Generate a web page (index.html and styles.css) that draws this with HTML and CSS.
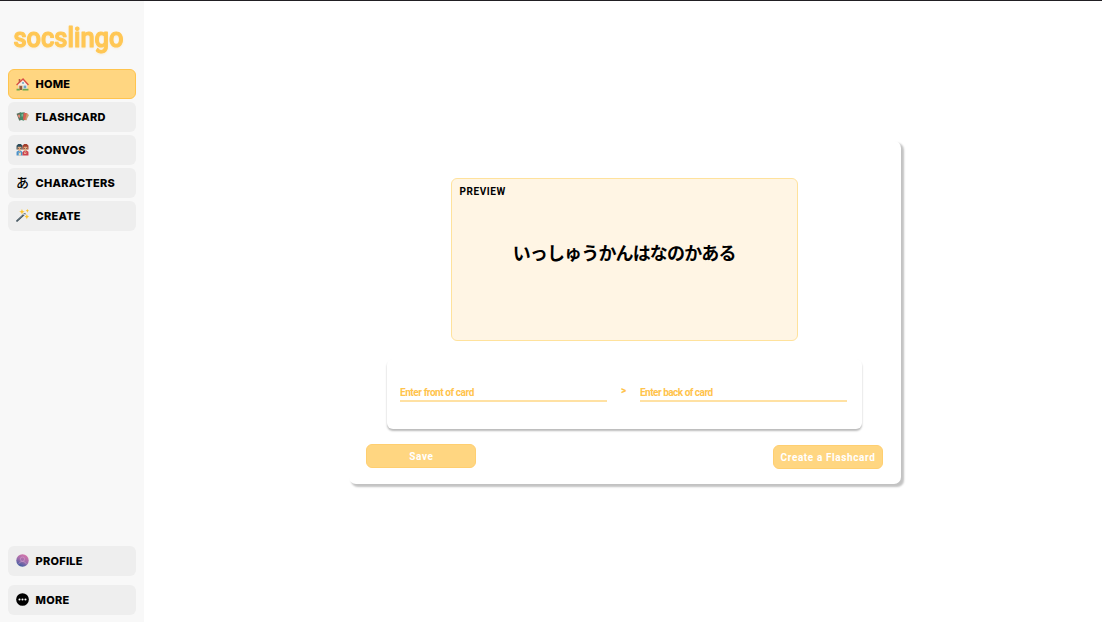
FILE: index.html
```
<!DOCTYPE html>
<html lang="en">
<head>
<meta charset="utf-8">
<title>socslingo</title>
<link rel="stylesheet" href="styles.css">
</head>
<body>
<div class="app">
  <aside class="sidebar">
    <svg class="logo" width="128" height="44" viewBox="0 0 128 44" role="img"><text x="5.500" y="25.700" textLength="110" lengthAdjust="spacingAndGlyphs">socslingo</text></svg>
    <nav class="nav">
      <a class="item active">
        <svg class="icon" viewBox="0 0 24 24"><path fill="#f3eee4" d="M4 11 13 3l8 8v11H4z"/><path fill="#d39a67" d="M5 14h7v8H5z"/><path fill="#8b563b" d="M7 15h4v7H7z"/><path fill="#6ca4c8" d="M14 14h5v5h-5z"/><circle cx="13" cy="9" r="1.8" fill="#649abd"/><path fill="none" stroke="#d94d46" stroke-width="2.5" d="M1 13 13 2l10 11"/><path fill="#bd5a46" d="M5 2h3v5L5 9z"/><path fill="#71a84c" d="M1 20h6v3H1zM12 20h11v3H12z"/></svg>
        <span>HOME</span>
      </a>
      <a class="item">
        <svg class="icon" viewBox="0 0 24 24"><path fill="#5c705d" d="m1 7 8-3 4 13-7 3z"/><path fill="#438968" d="m7 5 9-1-1 16-7-2z"/><path fill="#d85f51" d="m14 5 7 1-2 13-6-1z"/><path fill="#c7a06f" d="m20 6 4 3-5 10-2-1z"/><path fill="#e48877" d="m3 10 3-2 2 4-2 3z"/><path fill="#74b895" d="m10 8 3-1v5h-3z"/></svg>
        <span>FLASHCARD</span>
      </a>
      <a class="item">
        <svg class="icon" viewBox="0 0 24 24"><path fill="#2c4d5b" d="M1 11V5l3-3h5l3 3v7H1z"/><path fill="#a33e2c" d="M12 12V5l3-3h5l3 3v7z"/><path fill="#e3aa80" d="M3 7h7v6l-3 2-4-2zM14 7h7v6l-4 2-3-2z"/><path fill="#4a91ca" d="M1 23v-7l4-2 2 2 2-2 3 3v6z"/><path fill="#ce424d" d="M12 23v-6l3-3 2 2 2-2 4 2v7z"/><path fill="#f3ddb2" d="m5 16 2 3 2-3v7H5zM15 16l2 3 2-3v4h-4z"/><path fill="#333" d="M4 9h1v2H4zM8 9h1v2H8zM15 9h1v2h-1zM19 9h1v2h-1z"/></svg>
        <span>CONVOS</span>
      </a>
      <a class="item"><b class="icon kana">あ</b><span>CHARACTERS</span></a>
      <a class="item">
        <svg class="icon" viewBox="0 0 24 24"><path stroke="#42535e" stroke-width="3.4" stroke-linecap="round" d="M2 22 16 9"/><path stroke="#8b9aa1" stroke-width="1" d="m3 20 9-8"/><path stroke="#d5d9d9" stroke-width="3" d="m14 11 2-2"/><path fill="#fcc32c" d="m11 0 1.5 3.5L16 5l-3.500 1.500L11 10 9.500 6.500 6 5l3.500-1.500zM21 0l1 2 2 1-2 1-1 3-1-3-2-1 2-1zM20 9l1.300 3.500L24 14l-2.700 1.500L20 19l-1.300-3.500L16 14l2.700-1.500z"/></svg>
        <span>CREATE</span>
      </a>
    </nav>
    <nav class="nav bottom">
      <a class="item">
        <svg class="icon" viewBox="0 0 24 24"><defs><linearGradient id="avatar" x1=".8" y1="0" x2=".3" y2="1"><stop stop-color="#dc76aa"/><stop offset=".5" stop-color="#a26eac"/><stop offset="1" stop-color="#385ba0"/></linearGradient></defs><circle cx="12" cy="12" r="11.500" fill="url(#avatar)"/><g fill="none" stroke="#d8a4cf" stroke-opacity=".8" stroke-width="1.200"><circle cx="12" cy="9.500" r="4"/><path d="M5 19c1-7 13-7 14 0"/></g></svg>
        <span>PROFILE</span>
      </a>
      <a class="item">
        <svg class="icon" viewBox="0 0 24 24"><circle cx="12" cy="12" r="11.700"/><g fill="#fff"><circle cx="6.500" cy="12" r="1.900"/><circle cx="12" cy="12" r="1.900"/><circle cx="17.500" cy="12" r="1.900"/></g></svg>
        <span>MORE</span>
      </a>
    </nav>
  </aside>
  <main class="main">
    <section class="panel">
      <div class="preview">
        <h2>PREVIEW</h2>
        <p lang="ja">いっしゅうかんはなのかある</p>
      </div>
      <div class="fields">
        <div class="field"><span class="front">Enter front of card</span></div>
        <span class="arrow">&gt;</span>
        <div class="field"><span class="back">Enter back of card</span></div>
      </div>
      <div class="actions">
        <button class="save">Save</button>
        <button class="create">Create a Flashcard</button>
      </div>
    </section>
  </main>
</div>
</body>
</html>
```
FILE: styles.css
```
* { box-sizing: border-box; }
body { margin: 0; background: #fff; font-family: Inter, "Noto Sans CJK JP", sans-serif; }
.app { display: flex; height: 622px; border-top: 1px solid #211f23; overflow: hidden; }
.sidebar { display: flex; flex-direction: column; width: 143.500px; padding: 20px 8px 7.2px 7.500px; background: #f8f8f8; }
.logo { display: block; flex: none; height: 44px; margin-bottom: 4px; overflow: visible; }
.logo text { font: 500 27.5px Roboto, sans-serif; fill: #ffc755; stroke: #ffc755; stroke-width: 1.1px; stroke-linejoin: round; filter: drop-shadow(0 1px 1px #ffc75530); }
.nav { display: flex; flex-direction: column; gap: 2.9px; }
.bottom { margin-top: auto; gap: 9px; }
.item { display: flex; align-items: center; height: 30px; padding-left: 8.5px; gap: 6.5px; border-radius: 6px; background: #eee; color: #000; font-size: 11px; font-weight: 800; letter-spacing: .25px; }
.active { background: #ffd681; border: 1.5px solid #ffc44e; padding-left: 7.5px; }
.icon { width: 13px; height: 13px; flex: none; }
.kana { font: 500 13px/12px "Noto Sans CJK JP", sans-serif; letter-spacing: 0; }
.main { flex: 1; padding: 139.500px 0 0 205.5px; }
.panel { display: flex; flex-direction: column; width: 552px; height: 343px; padding: 37.500px 18px 14px 17.400px; border-radius: 7px; background: #fff; box-shadow: 2.500px 2.500px 2px #0000003d; }
.preview { flex: none; width: 346.500px; height: 163px; margin-left: 85px; border: 1px solid #ffe29c; border-radius: 6px; background: #fff5e4; }
.preview h2 { margin: 6px 0 0 7px; font: 700 10px/13px Roboto, sans-serif; letter-spacing: .6px; }
.preview p { margin: 40px 0 0; padding-right: 1px; text-align: center; font: 700 18px/28px "Noto Sans CJK JP", sans-serif; letter-spacing: -.85px; }
.fields { display: flex; flex: none; width: 475px; height: 70px; margin: 18px 0 0 20.600px; padding: 24px 15px 0 13px; border-radius: 6px; box-shadow: 0 2px 2px #00000045; color: #ffc34c; }
.field { width: 207px; height: 19px; border-bottom: 2px solid #ffe1a3; font: 700 10px/19px Roboto, sans-serif; white-space: nowrap; }
.front { letter-spacing: -.42px; }
.back { letter-spacing: -.5px; }
.arrow { width: 33px; text-align: center; font: 900 10px/16px Roboto, sans-serif; }
.actions { display: flex; justify-content: space-between; margin-top: 15px; }
button { width: 110px; height: 24px; padding: 2px 0 0; border: 1px solid #ffcf70; border-radius: 6px; background: #ffd681; color: #fff; font: 700 10px/20px Roboto, sans-serif; letter-spacing: .6px; white-space: nowrap; }
.create { margin-top: 1px; }
```
